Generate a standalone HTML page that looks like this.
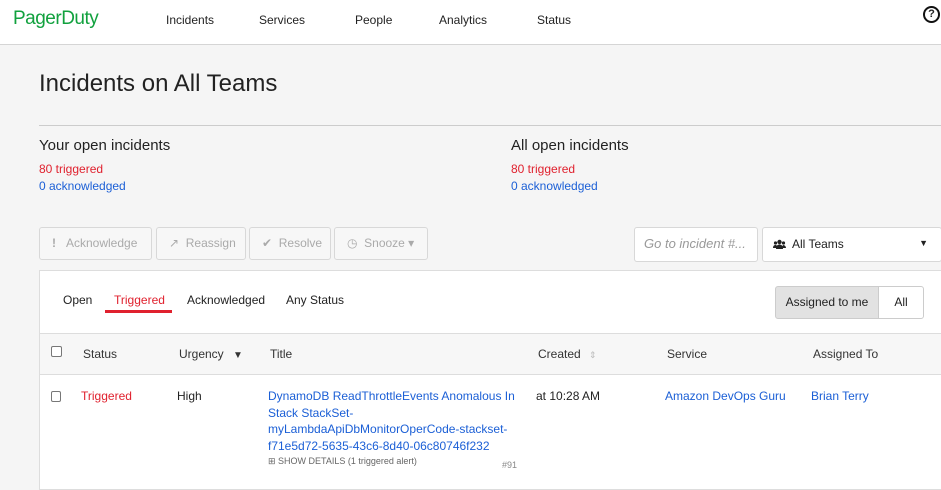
<!DOCTYPE html>
<html><head><style>
*{box-sizing:border-box;margin:0;padding:0}
body{width:941px;height:485px;overflow:hidden;background:#f5f5f5;font-family:"Liberation Sans",sans-serif;color:#222;position:relative}
.a{position:absolute;white-space:nowrap}
.hdr{position:absolute;left:0;top:0;width:941px;height:45px;background:#fff;border-bottom:1px solid #d5d5d5}
.nav{font-size:12px;color:#222;top:13px}
.btn{position:absolute;top:227px;height:33px;border:1px solid #d8d8d8;border-radius:3px;background:#f7f7f7;color:#aaa;font-size:12px;line-height:31px;padding-left:12px}
.blue{color:#1b5fd6}.red{color:#e0212e}
.th{font-size:12px;top:347px;color:#333}
.td{font-size:12px;top:389px}
</style></head><body>
<div class="hdr"></div>
<div class="a" style="left:13px;top:8px;font-size:19px;color:#11a13e;letter-spacing:-0.5px">PagerDuty</div>
<div class="a nav" style="left:166px">Incidents</div>
<div class="a nav" style="left:259px">Services</div>
<div class="a nav" style="left:355px">People</div>
<div class="a nav" style="left:439px">Analytics</div>
<div class="a nav" style="left:537px">Status</div>
<div class="a" style="left:923px;top:6px;width:17px;height:17px;border:2px solid #111;border-radius:50%;font-size:11px;font-weight:bold;text-align:center;line-height:13px">?</div>

<div class="a" style="left:39px;top:70px;font-size:24px;color:#222">Incidents on All Teams</div>
<div class="a" style="left:39px;top:125px;width:902px;height:1px;background:#ccc"></div>
<div class="a" style="left:39px;top:137px;font-size:15px">Your open incidents</div>
<div class="a red" style="left:39px;top:162px;font-size:12px">80 triggered</div>
<div class="a blue" style="left:39px;top:179px;font-size:12px">0 acknowledged</div>
<div class="a" style="left:511px;top:137px;font-size:15px">All open incidents</div>
<div class="a red" style="left:511px;top:162px;font-size:12px">80 triggered</div>
<div class="a blue" style="left:511px;top:179px;font-size:12px">0 acknowledged</div>

<div class="btn" style="left:39px;width:113px"><b style="margin-right:10px">!</b>Acknowledge</div>
<div class="btn" style="left:156px;width:90px">&#x2197;&nbsp;&nbsp;Reassign</div>
<div class="btn" style="left:249px;width:82px">✔&nbsp;&nbsp;Resolve</div>
<div class="btn" style="left:334px;width:94px">◷&nbsp;&nbsp;Snooze ▾</div>
<div class="a" style="left:634px;top:227px;width:124px;height:35px;background:#fff;border:1px solid #d8d8d8;border-radius:3px;font-size:13px;font-style:italic;color:#999;padding:8px 9px">Go to incident #...</div>
<div class="a" style="left:762px;top:227px;width:180px;height:35px;background:#fff;border:1px solid #d8d8d8;border-radius:3px;font-size:12px;padding:9px 10px 9px 29px">All Teams<span style="position:absolute;right:13px;top:10px;font-size:9px">▼</span>
<svg style="position:absolute;left:10px;top:11px" width="13" height="11" viewBox="0 0 13 11"><circle cx="6.5" cy="3" r="2.2" fill="#222"/><circle cx="2.5" cy="4" r="1.6" fill="#222"/><circle cx="10.5" cy="4" r="1.6" fill="#222"/><path d="M3 10c0-3 1.5-4.5 3.5-4.5S10 7 10 10z" fill="#222"/><path d="M0 9c0-2 1-3 2.5-3S4 7 4 9z" fill="#222"/><path d="M9 9c0-2 1-3 1.5-3S13 7 13 9z" fill="#222"/></svg></div>

<div class="a" style="left:39px;top:270px;width:903px;height:220px;background:#fff;border:1px solid #ddd"></div>
<div class="a" style="left:63px;top:293px;font-size:12px">Open</div>
<div class="a red" style="left:114px;top:293px;font-size:12px">Triggered</div>
<div class="a" style="left:105px;top:310px;width:67px;height:3px;background:#e0212e"></div>
<div class="a" style="left:187px;top:293px;font-size:12px">Acknowledged</div>
<div class="a" style="left:286px;top:293px;font-size:12px">Any Status</div>
<div class="a" style="left:775px;top:286px;width:104px;height:33px;background:#e2e2e2;border:1px solid #ccc;border-radius:3px 0 0 3px;font-size:12px;text-align:center;line-height:31px">Assigned to me</div>
<div class="a" style="left:878px;top:286px;width:46px;height:33px;background:#fff;border:1px solid #ccc;border-radius:0 3px 3px 0;font-size:12px;text-align:center;line-height:31px">All</div>

<div class="a" style="left:40px;top:333px;width:902px;height:42px;background:#f7f7f7;border-top:1px solid #ddd;border-bottom:1px solid #ddd"></div>
<div class="a" style="left:51px;top:346px;width:11px;height:11px;border:1px solid #777;border-radius:2px;background:#fff"></div>
<div class="a th" style="left:83px">Status</div>
<div class="a th" style="left:179px">Urgency <span style="font-size:10px;margin-left:6px">▼</span></div>
<div class="a th" style="left:270px">Title</div>
<div class="a th" style="left:538px">Created <span style="color:#bbb;font-size:9px;margin-left:5px">⇕</span></div>
<div class="a th" style="left:667px">Service</div>
<div class="a th" style="left:813px">Assigned To</div>

<div class="a" style="left:51px;top:391px;width:10px;height:11px;border:1px solid #777;border-radius:2px"></div>
<div class="a td red" style="left:81px">Triggered</div>
<div class="a td" style="left:177px">High</div>
<div class="a blue" style="left:268px;top:388px;font-size:12px;line-height:16.5px">DynamoDB ReadThrottleEvents Anomalous In<br>Stack StackSet-<br>myLambdaApiDbMonitorOperCode-stackset-<br>f71e5d72-5635-43c6-8d40-06c80746f232</div>
<div class="a" style="left:268px;top:456px;font-size:9px;color:#666">⊞ SHOW DETAILS (1 triggered alert)</div>
<div class="a" style="left:502px;top:460px;font-size:9px;color:#888">#91</div>
<div class="a td" style="left:536px">at 10:28 AM</div>
<div class="a td blue" style="left:665px">Amazon DevOps Guru</div>
<div class="a td blue" style="left:811px">Brian Terry</div>
</body></html>
